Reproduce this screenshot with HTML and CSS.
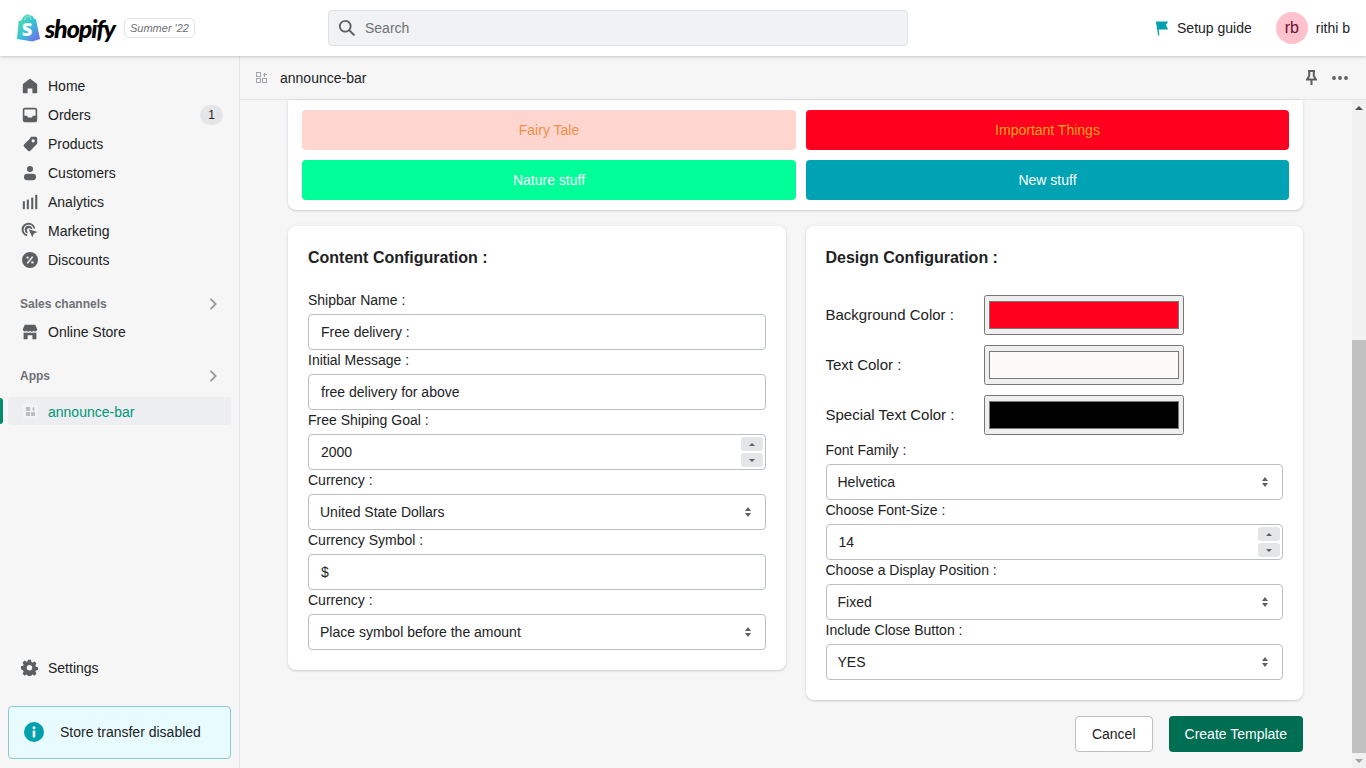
FILE: index.html
```html
<!DOCTYPE html>
<html lang="en">
<head>
    <meta charset="UTF-8">
    <meta name="viewport" content="width=device-width, initial-scale=1.0">
    <title>announce-bar</title>
    <link rel="stylesheet" href="styles.css">
</head>
<body>
    <!-- top bar -->
    <header class="topbar">
        <div class="brand">
            <svg class="bag" viewBox="0 0 26 30">
                <defs>
                    <linearGradient id="bagFill" x1="0" y1="0" x2="1" y2="1">
                        <stop offset="0" stop-color="#5fe0a0"/>
                        <stop offset="0.5" stop-color="#35c4d8"/>
                        <stop offset="1" stop-color="#7a5cf0"/>
                    </linearGradient>
                </defs>
                <path fill="url(#bagFill)" d="M2 7.500l4-1.300C6.800 3 9.500.5 12.500.5c1.200 0 2 .5 2.500 1.300l1.800-.4c1 1 1.600 2.500 1.900 3.400l2 .4L25 26l-8 2.500L1 26 2.800 7.500z"/>
                <path fill="none" stroke="#fff" stroke-opacity="0.55" stroke-width="1" d="M9 6.500C9.500 4 11 2 13 2c1.500 0 2.300 1.500 2.500 3.500"/>
                <text class="bag-s" x="6" y="23">S</text>
            </svg>
            <span class="wordmark">shopify</span>
            <span class="season">Summer '22</span>
        </div>
        <div class="search">
            <svg class="icon" viewBox="0 0 20 20"><path fill-rule="evenodd" d="M8 1a7 7 0 1 0 4.100 12.700l4.600 4.600a1.100 1.100 0 0 0 1.600-1.600l-4.600-4.600A7 7 0 0 0 8 1zm0 2a5 5 0 1 1 0 10A5 5 0 0 1 8 3z"/></svg>
            <span>Search</span>
        </div>
        <div class="top-right">
            <div class="setup">
                <svg class="flag" viewBox="0 0 16 18"><path fill="#00a0ac" d="M1 1h14l-2.500 4 2.500 5H4.200L5 17H3.600L1 1z"/></svg>
                <span>Setup guide</span>
            </div>
            <div class="user">
                <span class="avatar">rb</span>
                <span>rithi b</span>
            </div>
        </div>
    </header>

    <div class="frame">
        <!-- sidebar -->
        <nav class="sidebar">
            <ul class="nav-list">
                <li class="nav-item">
                    <svg class="icon" viewBox="0 0 20 20"><path d="M18.400 7.300 10.700 1.300a1 1 0 0 0-1.400 0L1.600 7.300a2 2 0 0 0-.6 1.400V18a1 1 0 0 0 1 1h5v-6h6v6h5a1 1 0 0 0 1-1V8.700a2 2 0 0 0-.6-1.400z"/></svg>
                    Home
                </li>
                <li class="nav-item">
                    <svg class="icon" viewBox="0 0 20 20"><path fill-rule="evenodd" d="M3.500 1h13A2.500 2.500 0 0 1 19 3.500v13a2.500 2.500 0 0 1-2.500 2.500h-13A2.500 2.500 0 0 1 1 16.500v-13A2.500 2.500 0 0 1 3.500 1zM3 3v8h3.500l1 2h5l1-2H17V3H3z"/></svg>
                    Orders
                    <span class="count">1</span>
                </li>
                <li class="nav-item">
                    <svg class="icon" viewBox="0 0 20 20"><path fill-rule="evenodd" d="M11 1h6a2 2 0 0 1 2 2v6a2 2 0 0 1-.6 1.400l-8 8a2 2 0 0 1-2.800 0l-5-5a2 2 0 0 1 0-2.800l8-8A2 2 0 0 1 11 1zm3 7a2 2 0 1 0 0-4 2 2 0 0 0 0 4z"/></svg>
                    Products
                </li>
                <li class="nav-item">
                    <svg class="icon" viewBox="0 0 20 20"><circle cx="10" cy="5" r="3.800"/><rect x="2.500" y="11" width="15" height="8" rx="4"/></svg>
                    Customers
                </li>
                <li class="nav-item">
                    <svg class="icon" viewBox="0 0 20 20"><rect x="1" y="9" width="2.600" height="10"/><rect x="6" y="7" width="2.600" height="12"/><rect x="11.500" y="4.500" width="2.600" height="14.500"/><rect x="16.500" y="1" width="2.600" height="18"/></svg>
                    Analytics
                </li>
                <li class="nav-item">
                    <svg class="icon wide" viewBox="0 0 20 20"><path d="M9 1a8 8 0 0 0-1.500 15.900l-.5-2.100A6 6 0 1 1 14.800 7.500l2 .5A8 8 0 0 0 9 1z"/><path d="M9 4.500a4.500 4.500 0 0 0-1 8.900l-.5-2.200A2.400 2.400 0 1 1 11.300 8l2.100.5A4.500 4.500 0 0 0 9 4.500z"/><path d="M9 8.500l10.500 3.200-4.300 1.900-1.900 4.400L9 8.500z"/></svg>
                    Marketing
                </li>
                <li class="nav-item">
                    <svg class="icon" viewBox="0 0 20 20"><path fill-rule="evenodd" d="M10 0a10 10 0 1 0 0 20 10 10 0 0 0 0-20zM7 5.500a1.500 1.500 0 1 1 0 3 1.500 1.500 0 0 1 0-3zm6 6a1.500 1.500 0 1 1 0 3 1.500 1.500 0 0 1 0-3zM12.500 5.300l1.700 1.100-6.700 8.300-1.700-1.100 6.700-8.300z"/></svg>
                    Discounts
                </li>
            </ul>

            <div class="section-head">
                <span>Sales channels</span>
                <svg class="chevron" viewBox="0 0 10 16"><path d="M2 2l6 6-6 6"/></svg>
            </div>
            <ul class="nav-list">
                <li class="nav-item">
                    <svg class="icon" viewBox="0 0 20 20"><path d="M3.500 1h13L19 6.500a2.700 2.700 0 0 1-4.500 2 3.300 3.300 0 0 1-4.500 0 3.300 3.300 0 0 1-4.500 0A2.700 2.700 0 0 1 1 6.500L3.500 1z"/><path d="M2 10.500a4.500 4.500 0 0 0 3.500.2 5 5 0 0 0 4.500 0 5 5 0 0 0 4.500 0 4.500 4.500 0 0 0 3.500-.2V19h-5v-5H7v5H2v-8.500z"/></svg>
                    Online Store
                </li>
            </ul>

            <div class="section-head">
                <span>Apps</span>
                <svg class="chevron" viewBox="0 0 10 16"><path d="M2 2l6 6-6 6"/></svg>
            </div>
            <div class="app-link">
                <span class="app-tile">
                    <svg class="app-icon" viewBox="0 0 9 9"><path d="M0 0h4v4H0zM0 5h4v4H0zM5 5h4v4H5zM6 1.500h1V0h1v1.500h1v1H8V4H7V2.500H6z"/></svg>
                </span>
                <span class="app-name">announce-bar</span>
            </div>

            <div class="nav-item settings">
                <svg class="icon wide" viewBox="0 0 20 20"><path fill-rule="evenodd" d="M8.300 1h3.400l.5 2.500 1.500.7 2.200-1.300 2.300 2.400-1.300 2.100.7 1.600 2.400.6v3.300l-2.400.6-.7 1.600 1.300 2.100-2.300 2.400-2.200-1.300-1.500.7-.5 2.500H8.300l-.5-2.500-1.500-.7-2.200 1.300-2.300-2.400 1.300-2.100-.7-1.600L0 11.900V8.600l2.400-.6.700-1.600-1.300-2.100 2.300-2.400 2.200 1.300 1.500-.7L8.300 1zM10 7a3.200 3.200 0 1 0 0 6.400A3.200 3.200 0 0 0 10 7z"/></svg>
                Settings
            </div>
            <div class="notice">
                <svg class="notice-icon" viewBox="0 0 20 20"><circle cx="10" cy="10" r="10" fill="#00a0ac"/><circle cx="10" cy="5.800" r="1.500" fill="#fff"/><rect x="8.700" y="8.500" width="2.600" height="7" rx="0.800" fill="#fff"/></svg>
                Store transfer disabled
            </div>
        </nav>

        <div class="main">
            <div class="app-head">
                <svg class="head-app" viewBox="0 0 11 11"><path d="M.5.500h4v4h-4zM.5 6.500h4v4h-4zM6.500 6.500h4v4h-4zM8.500.5v4M6.500 2.500h4"/></svg>
                <span>announce-bar</span>
                <div class="head-actions">
                    <svg class="pin" viewBox="0 0 11 15"><path d="M2 1h7M3.200 1v5L1 9.500h9L7.800 6V1M5.500 9.500V15"/></svg>
                    <svg class="dots" viewBox="0 0 16 4"><circle cx="2" cy="2" r="1.900"/><circle cx="8" cy="2" r="1.900"/><circle cx="14" cy="2" r="1.900"/></svg>
                </div>
            </div>

            <div class="content-row">
                <div class="content">
                    <section class="card templates">
                        <button class="tpl tpl-fairy">Fairy Tale</button>
                        <button class="tpl tpl-important">Important Things</button>
                        <button class="tpl tpl-nature">Nature stuff</button>
                        <button class="tpl tpl-new">New stuff</button>
                    </section>

                    <div class="config">
                        <section class="card panel">
                            <h2>Content Configuration :</h2>
                            <label class="field-label">Shipbar Name :</label>
                            <input class="text-input" type="text" value="Free delivery :">
                            <label class="field-label">Initial Message :</label>
                            <input class="text-input" type="text" value="free delivery for above">
                            <label class="field-label">Free Shiping Goal :</label>
                            <div class="number-wrap">
                                <input class="text-input" type="text" value="2000">
                                <div class="spinner">
                                    <span class="spin-btn"><i class="tri-up"></i></span>
                                    <span class="spin-btn"><i class="tri-down"></i></span>
                                </div>
                            </div>
                            <label class="field-label">Currency :</label>
                            <div class="select-wrap">
                                <select class="select-input"><option>United State Dollars</option></select>
                                <div class="select-arrows"><i class="tri-up"></i><i class="tri-down"></i></div>
                            </div>
                            <label class="field-label">Currency Symbol :</label>
                            <input class="text-input" type="text" value="$">
                            <label class="field-label">Currency :</label>
                            <div class="select-wrap">
                                <select class="select-input"><option>Place symbol before the amount</option></select>
                                <div class="select-arrows"><i class="tri-up"></i><i class="tri-down"></i></div>
                            </div>
                        </section>

                        <section class="card panel">
                            <h2>Design Configuration :</h2>
                            <div class="color-rows">
                                <div class="color-row">
                                    <label>Background Color :</label>
                                    <input type="color" value="#ff001e">
                                </div>
                                <div class="color-row">
                                    <label>Text Color :</label>
                                    <input type="color" value="#fbfaf8">
                                </div>
                                <div class="color-row">
                                    <label>Special Text Color :</label>
                                    <input type="color" value="#000000">
                                </div>
                            </div>
                            <label class="field-label">Font Family :</label>
                            <div class="select-wrap">
                                <select class="select-input"><option>Helvetica</option></select>
                                <div class="select-arrows"><i class="tri-up"></i><i class="tri-down"></i></div>
                            </div>
                            <label class="field-label">Choose Font-Size :</label>
                            <div class="number-wrap">
                                <input class="text-input" type="text" value="14">
                                <div class="spinner">
                                    <span class="spin-btn"><i class="tri-up"></i></span>
                                    <span class="spin-btn"><i class="tri-down"></i></span>
                                </div>
                            </div>
                            <label class="field-label">Choose a Display Position :</label>
                            <div class="select-wrap">
                                <select class="select-input"><option>Fixed</option></select>
                                <div class="select-arrows"><i class="tri-up"></i><i class="tri-down"></i></div>
                            </div>
                            <label class="field-label">Include Close Button :</label>
                            <div class="select-wrap">
                                <select class="select-input"><option>YES</option></select>
                                <div class="select-arrows"><i class="tri-up"></i><i class="tri-down"></i></div>
                            </div>
                        </section>
                    </div>

                    <div class="actions">
                        <button class="btn btn-plain">Cancel</button>
                        <button class="btn btn-primary">Create Template</button>
                    </div>
                </div>

                <!-- page scrollbar -->
                <div class="scrollbar">
                    <span class="scroll-arrow"><i class="tri-up"></i></span>
                    <div class="scroll-track"><div class="scroll-thumb"></div></div>
                    <span class="scroll-arrow"><i class="tri-down"></i></span>
                </div>
            </div>
        </div>
    </div>
</body>
</html>
```

FILE: styles.css
```css
* {
    box-sizing: border-box;
}
html, body {
    height: 100%;
}
body {
    margin: 0;
    overflow: hidden;
    display: flex;
    flex-direction: column;
    font-family: "Liberation Sans", Arial, sans-serif;
    font-size: 14px;
    line-height: 20px;
    color: #202223;
    background-color: #f6f6f7;
}

/* top bar */
.topbar {
    position: relative;
    z-index: 2;
    flex: 0 0 56px;
    display: flex;
    align-items: center;
    background-color: #fff;
    box-shadow: 0 1px 3px rgba(0, 0, 0, 0.2);
}
.brand {
    flex: 0 0 328px;
    display: flex;
    align-items: center;
    padding-left: 16px;
}
.bag {
    width: 25px;
    height: 29px;
}
.bag-s {
    font-family: "Open Sans", sans-serif;
    font-size: 19px;
    font-weight: 800;
    fill: #fff;
}
.wordmark {
    width: 71px;
    margin-left: 4px;
    font-family: Lato, sans-serif;
    font-size: 25px;
    font-weight: 900;
    font-style: italic;
    letter-spacing: -1.1px;
    color: #000;
}
.season {
    margin-left: 8px;
    padding: 0 5px;
    height: 20px;
    font-size: 11px;
    line-height: 18px;
    font-style: italic;
    color: #6d7175;
    border: 1px solid #e1e3e5;
    border-radius: 5px;
}
.search {
    flex: 0 0 580px;
    height: 36px;
    display: flex;
    align-items: center;
    gap: 9px;
    padding-left: 9px;
    color: #6d7175;
    background-color: #f1f2f3;
    border: 1px solid #dfe1e4;
    border-radius: 4px;
}
.search .icon {
    width: 18px;
    height: 18px;
}
.top-right {
    margin-left: auto;
    display: flex;
    align-items: center;
    padding-right: 16px;
}
.setup {
    display: flex;
    align-items: center;
    gap: 8px;
    margin-right: 24px;
}
.flag {
    width: 14px;
    height: 17px;
}
.user {
    display: flex;
    align-items: center;
    gap: 8px;
}
.avatar {
    width: 32px;
    height: 32px;
    display: flex;
    align-items: center;
    justify-content: center;
    font-size: 16px;
    color: #6b1030;
    background-color: #ffc1cc;
    border-radius: 50%;
}

/* sidebar */
.frame {
    flex: 1;
    display: flex;
    min-height: 0;
}
.sidebar {
    flex: 0 0 240px;
    display: flex;
    flex-direction: column;
    padding: 15px 0 9px;
    border-right: 1px solid #e1e3e5;
}
.nav-list {
    margin: 0;
    padding: 0;
    list-style: none;
}
.nav-item {
    height: 29px;
    display: flex;
    align-items: center;
    gap: 10px;
    padding: 0 16px 0 22px;
}
.icon {
    width: 16px;
    height: 16px;
    flex: none;
    fill: #5c5f62;
}
.icon.wide {
    width: 17px;
    height: 17px;
    margin-left: -1px;
}
.count {
    margin-left: auto;
    width: 23px;
    height: 20px;
    font-size: 12px;
    line-height: 20px;
    text-align: center;
    background-color: #e4e5e7;
    border-radius: 10px;
}
.section-head {
    height: 28px;
    margin-top: 15px;
    display: flex;
    align-items: center;
    justify-content: space-between;
    padding: 0 21px 0 20px;
    font-size: 12px;
    font-weight: 700;
    color: #6d7175;
}
.section-head span {
    padding-top: 2px;
}
.chevron {
    width: 10px;
    height: 14px;
    margin-top: 1px;
    fill: none;
    stroke: #8c9196;
    stroke-width: 2;
}
.app-link {
    position: relative;
    height: 28px;
    margin: 8px 8px 0;
    display: flex;
    align-items: center;
    gap: 10px;
    padding-left: 14px;
    color: #00967a;
    background-color: #edeeef;
    border-radius: 4px;
}
.app-link::before {
    content: "";
    position: absolute;
    left: -8px;
    top: 1px;
    bottom: 1px;
    width: 3px;
    background-color: #008f6a;
    border-radius: 0 3px 3px 0;
}
.app-name {
    padding-top: 2px;
}
.app-tile {
    width: 16px;
    height: 16px;
    display: flex;
    align-items: center;
    justify-content: center;
    background-color: #f1f2f3;
    border-radius: 3px;
}
.app-icon {
    width: 9px;
    height: 9px;
    fill: #babec3;
}
.settings {
    margin-top: auto;
}
.notice {
    height: 53px;
    margin: 24px 8px 0;
    display: flex;
    align-items: center;
    gap: 16px;
    padding: 0 0 1px 15px;
    background-color: #e8fbff;
    border: 1px solid #8ccad2;
    border-radius: 4px;
}
.notice-icon {
    width: 20px;
    height: 20px;
    flex: none;
}

/* app header */
.main {
    flex: 1;
    min-width: 0;
    display: flex;
    flex-direction: column;
}
.app-head {
    flex: 0 0 44px;
    display: flex;
    align-items: center;
    padding: 0 18px 0 16px;
    border-bottom: 1px solid #e1e3e5;
}
.head-app {
    width: 11px;
    height: 11px;
    margin-right: 13px;
    fill: none;
    stroke: #a0a6ac;
    stroke-width: 1;
    shape-rendering: crispEdges;
}
.head-actions {
    margin-left: auto;
    display: flex;
    align-items: center;
    gap: 15px;
}
.pin {
    width: 11px;
    height: 15px;
    fill: none;
    stroke: #5c5f62;
    stroke-width: 2;
}
.dots {
    width: 16px;
    height: 4px;
    fill: #5c5f62;
}

/* content */
.content-row {
    flex: 1;
    min-height: 0;
    display: flex;
}
.content {
    flex: 1;
    min-width: 0;
    padding: 0 49px 0 48px;
}
.card {
    background-color: #fff;
    border-radius: 8px;
    box-shadow: 0 0 5px rgba(23, 24, 24, 0.05), 0 1px 2px rgba(0, 0, 0, 0.15);
}
.templates {
    display: grid;
    grid-template-columns: 494px 1fr;
    gap: 10px;
    padding: 10px 14px;
    border-radius: 0 0 8px 8px;
}
.tpl {
    height: 40px;
    font-family: inherit;
    font-size: 14px;
    border: none;
    border-radius: 4px;
}
.tpl-fairy {
    color: #f28f4a;
    background-color: #ffd6cf;
}
.tpl-important {
    color: #ffa51f;
    background-color: #ff001e;
}
.tpl-nature {
    color: #fff;
    background-color: #00ff99;
}
.tpl-new {
    color: #fff;
    background-color: #00a3b4;
}
.config {
    display: grid;
    grid-template-columns: 1fr 1fr;
    gap: 20px;
    align-items: start;
    margin-top: 16px;
}
.panel {
    padding: 20px;
}
.panel h2 {
    margin: 0 0 20px;
    font-size: 16px;
    line-height: 24px;
    font-weight: 700;
}
.field-label {
    display: block;
    height: 24px;
}
.text-input,
.select-input {
    display: block;
    width: 100%;
    height: 36px;
    font-family: inherit;
    font-size: 14px;
    color: #202223;
    background-color: #fff;
    border: 1px solid #babfc3;
    border-radius: 4px;
}
.text-input {
    padding: 0 12px;
}
.select-input {
    padding: 0 11px;
    appearance: none;
}
.number-wrap,
.select-wrap {
    position: relative;
}
.spinner {
    position: absolute;
    top: 3px;
    right: 3px;
    display: flex;
    flex-direction: column;
    gap: 2px;
}
.spin-btn {
    width: 22px;
    height: 14px;
    display: flex;
    align-items: center;
    justify-content: center;
    background-color: #e4e5e7;
    border-radius: 3px;
}
.tri-up,
.tri-down {
    display: block;
    width: 0;
    height: 0;
    border-left: 3px solid transparent;
    border-right: 3px solid transparent;
}
.tri-up {
    border-bottom: 3px solid #5c5f62;
}
.tri-down {
    border-top: 3px solid #5c5f62;
}
.select-arrows {
    position: absolute;
    top: 13px;
    right: 15px;
    display: flex;
    flex-direction: column;
    gap: 2px;
}
.select-arrows .tri-up {
    border-left-width: 3.5px;
    border-right-width: 3.5px;
    border-bottom-width: 4px;
}
.select-arrows .tri-down {
    border-left-width: 3.5px;
    border-right-width: 3.5px;
    border-top-width: 4px;
}
.color-rows {
    display: flex;
    flex-direction: column;
    gap: 10px;
    padding: 5px 0;
}
.color-row {
    display: flex;
    align-items: center;
}
.color-row label {
    flex: 0 0 158px;
    font-size: 15px;
}
.color-row input {
    width: 200px;
    height: 40px;
}
.actions {
    display: flex;
    justify-content: flex-end;
    gap: 16px;
    margin-top: 16px;
}
.btn {
    height: 36px;
    padding: 0 16px;
    font-family: inherit;
    font-size: 14px;
    border-radius: 4px;
}
.btn-plain {
    color: #202223;
    background-color: #fff;
    border: 1px solid #babfc3;
}
.btn-primary {
    color: #fff;
    background-color: #006e52;
    border: none;
}

/* scrollbar */
.scrollbar {
    flex: 0 0 14px;
    display: flex;
    flex-direction: column;
    background-color: #f1f1f1;
}
.scroll-arrow {
    flex: 0 0 15px;
    display: flex;
    align-items: center;
    justify-content: center;
}
.scroll-arrow .tri-up {
    border-left-width: 4px;
    border-right-width: 4px;
    border-bottom: 4px solid #505050;
}
.scroll-arrow .tri-down {
    border-left-width: 4px;
    border-right-width: 4px;
    border-top: 4px solid #a3a3a3;
}
.scroll-track {
    flex: 1;
    padding-top: 225px;
}
.scroll-thumb {
    height: 100%;
    background-color: #c1c1c1;
}
```
